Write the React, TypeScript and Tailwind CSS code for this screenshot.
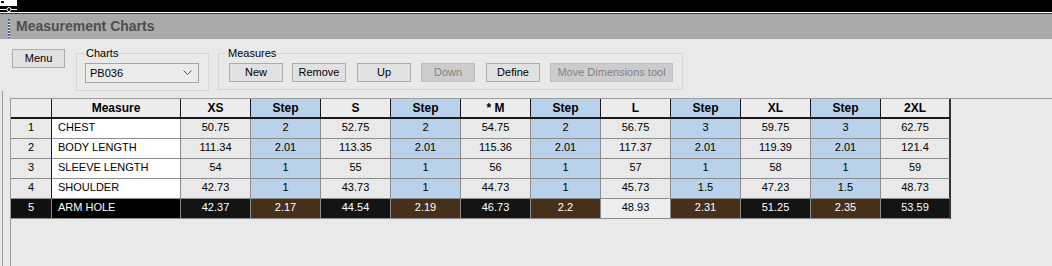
import { ReactNode } from 'react';

const columns = ['XS', 'Step', 'S', 'Step', '* M', 'Step', 'L', 'Step', 'XL', 'Step', '2XL'];

const rows = [
  { name: 'CHEST', values: ['50.75', '2', '52.75', '2', '54.75', '2', '56.75', '3', '59.75', '3', '62.75'] },
  { name: 'BODY LENGTH', values: ['111.34', '2.01', '113.35', '2.01', '115.36', '2.01', '117.37', '2.01', '119.39', '2.01', '121.4'] },
  { name: 'SLEEVE LENGTH', values: ['54', '1', '55', '1', '56', '1', '57', '1', '58', '1', '59'] },
  { name: 'SHOULDER', values: ['42.73', '1', '43.73', '1', '44.73', '1', '45.73', '1.5', '47.23', '1.5', '48.73'] },
  { name: 'ARM HOLE', values: ['42.37', '2.17', '44.54', '2.19', '46.73', '2.2', '48.93', '2.31', '51.25', '2.35', '53.59'] },
];

const selectedRow = 4;
const currentCol = 6;

function Button({ children, width, disabled }: { children: ReactNode; width: string; disabled?: boolean }) {
  return (
    <div
      className={
        disabled
          ? `${width} h-[19px] flex items-center justify-center border border-[#bfbfbf] bg-[#cccccc] text-[#838383]`
          : `${width} h-[19px] flex items-center justify-center border border-[#adadad] bg-[#e1e1e1] text-black`
      }
    >
      {children}
    </div>
  );
}

function HeaderCell({ label, index }: { label: string; index: number }) {
  const step = label === 'Step';
  const last = index === columns.length - 1;
  return (
    <div
      className={`h-[20px] flex items-center justify-center border-b-2 border-b-[#1a1a1a] font-bold text-[12px] ${
        step ? 'bg-[#b9d1ea]' : 'bg-[#ececec]'
      } ${last ? 'border-r-2 border-r-[#333333]' : 'border-r border-r-[#1a1a1a]'}`}
    >
      {label}
    </div>
  );
}

function DataCell({ value, col, row }: { value: string; col: number; row: number }) {
  const step = columns[col] === 'Step';
  const last = col === columns.length - 1;
  const selected = row === selectedRow;
  let tone = 'bg-[#e9e9e9] text-black';
  if (selected && col === currentCol) tone = 'bg-[#eeeeee] text-black';
  else if (selected && step) tone = 'bg-[#47301a] text-white';
  else if (selected) tone = 'bg-[#141414] text-white';
  else if (step) tone = 'bg-[#b9d1ea] text-black';
  return (
    <div
      className={`h-[20px] flex items-center justify-center pb-[2px] border-b border-b-[#8c8c8c] text-[11px] ${tone} ${
        last ? 'border-r-2 border-r-[#333333]' : 'border-r border-r-[#8c8c8c]'
      }`}
    >
      {value}
    </div>
  );
}

export default function App() {
  return (
    <div className="w-[1052px] h-[266px] overflow-hidden flex flex-col bg-[#e9e9e9] font-['Liberation_Sans',Arial,sans-serif] text-black">
      {/* window strip */}
      <div className="h-[12px] bg-black flex">
        <svg width="18" height="12" viewBox="0 0 18 12">
          <rect x="0" y="0" width="17" height="6" fill="#ffffff" />
          <rect x="1" y="1" width="3" height="2" fill="#000000" />
          <line x1="0" y1="9.5" x2="17" y2="9.5" stroke="#ffffff" strokeWidth="1" />
          <circle cx="9" cy="9.5" r="2" fill="#000000" stroke="#ffffff" strokeWidth="1" />
        </svg>
      </div>
      <div className="h-px bg-white" />
      <div className="h-px bg-[#3a3a3a]" />

      {/* title bar */}
      <div className="h-[25px] bg-[#a9a9a9] flex items-center pl-[8px]">
        <div className="w-[2px] h-[19px] mt-[3px] bg-[repeating-linear-gradient(to_bottom,#3e5f9e_0px,#3e5f9e_2px,#f2f2f2_2px,#f2f2f2_3px)]" />
        <span className="ml-[6px] text-[14px] font-bold text-[#4f4f4f]">Measurement Charts</span>
      </div>

      {/* toolbar */}
      <div className="flex items-start pl-[12px] text-[11px]">
        <div className="mt-[10px]">
          <Button width="w-[53px]">Menu</Button>
        </div>

        <fieldset className="ml-[11px] mt-[7px] w-[133px] border border-[#d6d6d6] pl-[8px] pr-[9px] pt-[3px] pb-[7px]">
          <legend className="px-[1px] leading-[14px] text-[11px]">Charts</legend>
          <div className="h-[20px] flex items-center justify-between border border-[#a5a5a5] bg-[#ebebeb] pl-[4px] pr-[6px]">
            <span className="text-[11px]">PB036</span>
            <svg width="9" height="6" viewBox="0 0 9 6">
              <path d="M0.5 0.5 L4.5 4.5 L8.5 0.5" fill="none" stroke="#505050" strokeWidth="1" />
            </svg>
          </div>
        </fieldset>

        <fieldset className="ml-[9px] mt-[7px] w-[465px] border border-[#d6d6d6] pl-[10px] pr-[8px] pt-[3px] pb-[7px]">
          <legend className="-ml-[2px] px-[1px] leading-[14px] text-[11px]">Measures</legend>
          <div className="flex items-center">
            <Button width="w-[54px]">New</Button>
            <div className="ml-[9px]">
              <Button width="w-[54px]">Remove</Button>
            </div>
            <div className="ml-[11px]">
              <Button width="w-[54px]">Up</Button>
            </div>
            <div className="ml-[10px]">
              <Button width="w-[54px]" disabled>Down</Button>
            </div>
            <div className="ml-[11px]">
              <Button width="w-[54px]">Define</Button>
            </div>
            <div className="ml-[10px]">
              <Button width="w-[123px]" disabled>Move Dimensions tool</Button>
            </div>
          </div>
        </fieldset>
      </div>

      {/* grid */}
      <div className="flex-1 flex ml-[2px] border-l border-l-[#9a9a9a]">
        <div className="flex-1 mt-[7px] ml-[7px] border-l border-t border-[#9c9c9c]">
          <div className="grid grid-cols-[41px_129px_repeat(11,70px)] w-[940px]">
            <div className="h-[20px] bg-[#ececec] border-b-2 border-b-[#1a1a1a] border-r border-r-[#1a1a1a]" />
            <div className="h-[20px] flex items-center justify-center bg-[#ececec] border-b-2 border-b-[#1a1a1a] border-r border-r-[#1a1a1a] font-bold text-[12px]">
              Measure
            </div>
            {columns.map((c, i) => (
              <HeaderCell key={i} label={c} index={i} />
            ))}

            {rows.map((r, ri) => {
              const selected = ri === selectedRow;
              return [
                <div
                  key={`n${ri}`}
                  className={
                    selected
                      ? 'h-[20px] flex items-center justify-center pb-[2px] bg-[#111111] text-white text-[11px] border-b border-b-[#8c8c8c] border-r border-r-[#8c8c8c]'
                      : 'h-[20px] flex items-center justify-center pb-[2px] bg-[#e9e9e9] text-[11px] border-b border-b-[#8c8c8c] border-r border-r-[#1a1a1a]'
                  }
                >
                  {ri + 1}
                </div>,
                <div
                  key={`m${ri}`}
                  className={
                    selected
                      ? 'h-[20px] flex items-center pl-[6px] pb-[2px] bg-black text-white text-[11px] border-b border-b-[#8c8c8c] border-r border-r-[#8c8c8c]'
                      : 'h-[20px] flex items-center pl-[6px] pb-[2px] bg-white text-[11px] border-b border-b-[#8c8c8c] border-r border-r-[#8c8c8c]'
                  }
                >
                  {r.name}
                </div>,
                ...r.values.map((v, ci) => <DataCell key={`${ri}-${ci}`} value={v} col={ci} row={ri} />),
              ];
            })}
          </div>
        </div>
      </div>
    </div>
  );
}
